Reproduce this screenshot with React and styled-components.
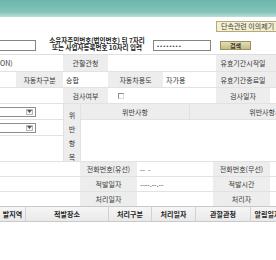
import React from 'react';
import styled, { createGlobalStyle } from 'styled-components';

const GlobalStyle = createGlobalStyle`
  *, *::before, *::after { box-sizing: border-box; }
  html, body { margin: 0; padding: 0; background: #fff; }
  body {
    font-family: "Noto Sans CJK KR", "Noto Sans", sans-serif;
    font-size: 7px;
    color: #333;
  }
`;

const Page = styled.div`
  width: 276px;
  height: 260px;
  overflow: hidden;
  background: #fff;
`;

const Banner = styled.div`
  height: 17px;
  background: linear-gradient(to bottom, #6cb5aa 0%, #82c3ba 70%, #b8dfd8 100%);
`;

const TopBar = styled.div`
  height: 16px;
  display: flex;
  justify-content: flex-end;
  align-items: flex-end;
  padding-bottom: 1px;
`;

const ComplaintButton = styled.div`
  width: 64px;
  height: 11px;
  margin-right: -4px;
  display: flex;
  align-items: center;
  padding-left: 4px;
  background: #f3efd2;
  border: 1px solid #b5aa76;
  border-right: none;
  color: #3a3a3a;
  line-height: 9px;
  white-space: nowrap;
`;

const SearchRow = styled.div`
  height: 22px;
  display: flex;
  align-items: center;
  border-bottom: 1px solid #dedede;
`;

const TextInput = styled.div`
  height: 11px;
  margin-top: 4px;
  background: #fff;
  border: 1px solid #858585;
  border-left: ${p => (p.$open ? 'none' : '1px solid #858585')};
  width: ${p => p.$w}px;
  margin-left: ${p => p.$ml || 0}px;
  display: flex;
  align-items: center;
  padding-left: 3px;
`;

const Dots = styled.span`
  font-family: "Liberation Sans", sans-serif;
  font-size: 6px;
  letter-spacing: 1px;
  color: #444;
  line-height: 6px;
`;

const Hint = styled.div`
  width: 108px;
  margin-left: 7px;
  display: flex;
  flex-direction: column;
  align-items: center;
  font-size: 6.5px;
  font-weight: 700;
  line-height: 7px;
  color: #222;
  white-space: nowrap;
`;

const SearchButton = styled.div`
  width: 31px;
  height: 9px;
  margin-left: 9px;
  margin-top: 3px;
  display: flex;
  align-items: center;
  justify-content: center;
  background: linear-gradient(to bottom, #e6dfb5, #c6bb82);
  border: 1px solid #9c9160;
  color: #333;
  font-weight: 700;
  font-size: 6px;
  line-height: 7px;
`;

const Form = styled.div`
  display: flex;
  flex-direction: column;
  gap: 1px;
  background: #e2e2e2;
`;

const Grid = styled.div`
  display: grid;
  grid-template-columns: ${p => p.$cols};
  grid-template-rows: ${p => p.$rows};
  row-gap: 1px;
  column-gap: ${p => p.$colGap || 0}px;
  background: #e2e2e2;
  overflow: hidden;
`;

const Cell = styled.div`
  grid-column: ${p => p.$col || 'auto'};
  grid-row: ${p => p.$row || 'auto'};
  display: flex;
  align-items: center;
  justify-content: ${p => (p.$label ? 'center' : 'flex-start')};
  padding-left: ${p => (p.$label ? 0 : p.$pl ?? 3)}px;
  padding-right: ${p => p.$pr || 0}px;
  background: ${p => (p.$label ? '#ededed' : '#fff')};
  color: ${p => (p.$label ? '#3a3a3a' : '#333')};
  white-space: nowrap;
  overflow: hidden;
  line-height: 8px;
`;

const VerticalLabel = styled.div`
  grid-column: 2;
  grid-row: 1 / 4;
  background: #ededed;
  display: flex;
  flex-direction: column;
  align-items: center;
  padding-top: 4px;
  color: #3a3a3a;
  line-height: 14px;
`;

const Select = styled.div`
  width: 36px;
  height: 10px;
  background: #fff;
  border: 1px solid #8e8e8e;
  border-left: none;
  display: flex;
  justify-content: flex-end;
  align-items: center;
  padding-right: 2px;
`;

const SelectArrow = styled.span`
  width: 7px;
  height: 6px;
  border: 1px solid #b8b8b8;
  display: flex;
  align-items: center;
  justify-content: center;
  background: #f6f6f6;
`;

const Checkbox = styled.span`
  width: 6px;
  height: 6px;
  margin-left: 7px;
  border: 1px solid #8a8a8a;
  border-right-color: #dcdcdc;
  border-bottom-color: #dcdcdc;
  background: #fff;
`;

const ListHeader = styled.div`
  display: grid;
  grid-template-columns: 25px 83px 43px 44px 55px 34px;
  height: 16px;
  border-top: 1px solid #c9c9c9;
  border-bottom: 1px solid #c9c9c9;
  background: linear-gradient(to bottom, #f6f6f6, #e9e9e9);
  overflow: hidden;
`;

const HeaderCell = styled.div`
  display: flex;
  align-items: center;
  justify-content: center;
  border-left: ${p => (p.$first ? 'none' : '1px solid #d2d2d2')};
  font-weight: 700;
  color: #222;
  white-space: nowrap;
  overflow: hidden;
`;

const Arrow = () => (
  <svg width="5" height="3" viewBox="0 0 5 3">
    <path d="M0 0 L5 0 L2.5 3 Z" fill="#555" />
  </svg>
);

export default function App() {
  return (
    <Page>
      <GlobalStyle />
      <Banner />
      <TopBar>
        <ComplaintButton>단속관련 이의제기</ComplaintButton>
      </TopBar>
      <SearchRow>
        <TextInput $w={36} $open />
        <Hint>
          <span>소유자주민번호(법인번호) 뒤 7자리</span>
          <span>또는 사업자등록번호 10자리 입력</span>
        </Hint>
        <TextInput $w={58} $ml={2}>
          <Dots>••••••••</Dots>
        </TextInput>
        <SearchButton>검색</SearchButton>
      </SearchRow>

      <Form>
        <Grid $cols="16px 47px 45px 55px 53px 54px 6px" $rows="16px 15px 15px">
          <Cell $col="1 / 3" $pl={0}>ON)</Cell>
          <Cell $col="3" $label>관할관청</Cell>
          <Cell $col="4 / 6" />
          <Cell $col="6 / 8" $label $pr={6}>유효기간시작일</Cell>

          <Cell $col="1" />
          <Cell $col="2" $label>자동차구분</Cell>
          <Cell $col="3">승합</Cell>
          <Cell $col="4" $label>자동차용도</Cell>
          <Cell $col="5">자가용</Cell>
          <Cell $col="6 / 8" $label $pr={6}>유효기간종료일</Cell>

          <Cell $col="1 / 3" />
          <Cell $col="3" $label>검사여부</Cell>
          <Cell $col="4 / 6"><Checkbox /></Cell>
          <Cell $col="6" $label>검사일자</Cell>
          <Cell $col="7" />
        </Grid>

        <Grid $cols="63px 16px 108px 170px" $rows="15px 15px 25px" $colGap={1}>
          <Cell $col="1" $row="1" $pl={0}>
            <Select><SelectArrow><Arrow /></SelectArrow></Select>
          </Cell>
          <VerticalLabel>
            <span>위</span>
            <span>반</span>
            <span>항</span>
            <span>목</span>
          </VerticalLabel>
          <Cell $col="3" $row="1" $label>위반사항</Cell>
          <Cell $col="4" $row="1" $label>위반사항세부내용</Cell>
          <Cell $col="1" $row="2" $pl={0}>
            <Select><SelectArrow><Arrow /></SelectArrow></Select>
          </Cell>
          <Cell $col="3 / 5" $row="2 / 4" />
          <Cell $col="1" $row="3" />
        </Grid>

        <Grid $cols="80px 57px 76px 57px 6px" $rows="14px 14px 14px">
          <Cell />
          <Cell $label>전화번호(유선)</Cell>
          <Cell>-- &nbsp;-</Cell>
          <Cell $label>전화번호(무선)</Cell>
          <Cell />

          <Cell />
          <Cell $label>적발일자</Cell>
          <Cell>----.--.--</Cell>
          <Cell $label>적발시간</Cell>
          <Cell />

          <Cell />
          <Cell $label>처리일자</Cell>
          <Cell />
          <Cell $label>처리자</Cell>
          <Cell />
        </Grid>
      </Form>

      <ListHeader>
        <HeaderCell $first>발지역</HeaderCell>
        <HeaderCell>적발장소</HeaderCell>
        <HeaderCell>처리구분</HeaderCell>
        <HeaderCell>처리일자</HeaderCell>
        <HeaderCell>관할관청</HeaderCell>
        <HeaderCell>알림일자</HeaderCell>
      </ListHeader>
    </Page>
  );
}
